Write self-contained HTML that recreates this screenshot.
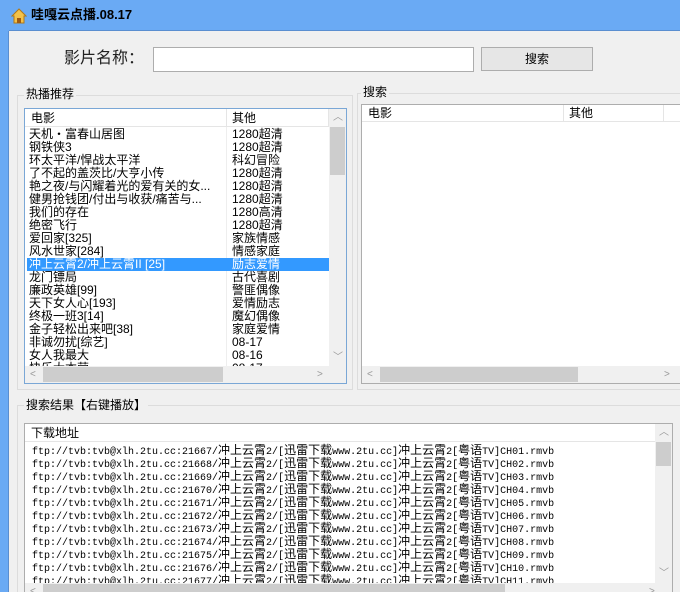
<!DOCTYPE html>
<html style="overflow:hidden;width:680px;height:592px"><head><meta charset="utf-8"><style>
*{margin:0;padding:0;box-sizing:border-box}
body{width:680px;height:592px;overflow:hidden;background:#f0f0f0;position:relative;font-family:"Liberation Sans","Noto Sans CJK SC",sans-serif;font-size:12px;color:#000}
.a{position:absolute}
.grp{position:absolute;border:1px solid #dcdcdc}
.lbl{position:absolute;background:#f0f0f0;padding:0 2px;font-size:12px;line-height:14px}
.list{position:absolute;background:#fff;overflow:hidden}
.row{height:13px;line-height:13px;white-space:nowrap;position:relative;font-size:12px}
.row span{position:absolute;top:0}
.sb{position:absolute;background:#f0f0f0}
.th{position:absolute;background:#cdcdcd}
.arr{position:absolute;color:#999;font-size:10px;line-height:10px}
.mono{font-family:"Liberation Mono","Noto Sans CJK SC",monospace;font-size:10px;height:13px;line-height:13px;white-space:nowrap;padding-left:7px}
.mono b{font-weight:normal;font-family:"Noto Sans CJK SC",sans-serif;font-size:12px}
</style></head><body>
<div class="a" style="left:0;top:0;width:680px;height:31px;background:#6aaaf4;border-bottom:1px solid #5a8ed0"></div>
<div class="a" style="left:0;top:0;width:9px;height:592px;background:#6aaaf4"></div>
<div class="a" style="left:8px;top:31px;width:1px;height:561px;background:#5a8ed0"></div>
<svg class="a" style="left:11px;top:8px" width="16" height="16" viewBox="0 0 16 16"><path d="M1 8 L8 1 L15 8 L13 8 L13 15 L3 15 L3 8Z" fill="#f3c24a" stroke="#b07818"/><rect x="6" y="10" width="4" height="5" fill="#a05a10"/></svg>
<div class="a" style="left:31px;top:6px;font-weight:bold;font-size:13px;line-height:18px">哇嘎云点播.08.17</div>

<div class="a" style="left:64px;top:49px;font-size:16px;line-height:20px;color:#222">影片名称：</div>
<div class="a" style="left:153px;top:47px;width:321px;height:25px;background:#fff;border:1px solid #adadad"></div>
<div class="a" style="left:481px;top:47px;width:112px;height:24px;background:#e6e6e6;border:1px solid #adadad;text-align:center;line-height:22px">搜索</div>

<div class="grp" style="left:17px;top:95px;width:336px;height:295px"></div>
<div class="lbl" style="left:24px;top:87px">热播推荐</div>
<div class="list" style="left:24px;top:108px;width:323px;height:276px;border:1px solid #7aa7d6">
 <div class="a" style="left:0;top:0;width:305px;height:18px;border-bottom:1px solid #e5e5e5"></div>
 <div class="a" style="left:201px;top:0;width:1px;height:18px;background:#e5e5e5"></div>
 <div class="a" style="left:303px;top:0;width:1px;height:18px;background:#e5e5e5"></div>
 <div class="a" style="left:6px;top:2px;line-height:14px">电影</div>
 <div class="a" style="left:207px;top:2px;line-height:14px">其他</div>
 <div class="a" style="left:201px;top:18px;width:1px;height:240px;background:#eee"></div>
 <div class="a" style="left:2px;top:19px;width:302px">
  <div class="row"><span style="left:2px">天机・富春山居图</span><span style="left:205px">1280超清</span></div>
  <div class="row"><span style="left:2px">钢铁侠3</span><span style="left:205px">1280超清</span></div>
  <div class="row"><span style="left:2px">环太平洋/悍战太平洋</span><span style="left:205px">科幻冒险</span></div>
  <div class="row"><span style="left:2px">了不起的盖茨比/大亨小传</span><span style="left:205px">1280超清</span></div>
  <div class="row"><span style="left:2px">艳之夜/与闪耀着光的爱有关的女...</span><span style="left:205px">1280超清</span></div>
  <div class="row"><span style="left:2px">健男抢钱团/付出与收获/痛苦与...</span><span style="left:205px">1280超清</span></div>
  <div class="row"><span style="left:2px">我们的存在</span><span style="left:205px">1280高清</span></div>
  <div class="row"><span style="left:2px">绝密飞行</span><span style="left:205px">1280超清</span></div>
  <div class="row"><span style="left:2px">爱回家[325]</span><span style="left:205px">家族情感</span></div>
  <div class="row"><span style="left:2px">风水世家[284]</span><span style="left:205px">情感家庭</span></div>
  <div class="row" style="background:#3399ff;color:#fff"><span style="left:2px">冲上云霄2/冲上云霄II [25]</span><span style="left:205px">励志爱情</span></div>
  <div class="row"><span style="left:2px">龙门镖局</span><span style="left:205px">古代喜剧</span></div>
  <div class="row"><span style="left:2px">廉政英雄[99]</span><span style="left:205px">警匪偶像</span></div>
  <div class="row"><span style="left:2px">天下女人心[193]</span><span style="left:205px">爱情励志</span></div>
  <div class="row"><span style="left:2px">终极一班3[14]</span><span style="left:205px">魔幻偶像</span></div>
  <div class="row"><span style="left:2px">金子轻松出来吧[38]</span><span style="left:205px">家庭爱情</span></div>
  <div class="row"><span style="left:2px">非诚勿扰[综艺]</span><span style="left:205px">08-17</span></div>
  <div class="row"><span style="left:2px">女人我最大</span><span style="left:205px">08-16</span></div>
  <div class="row"><span style="left:2px">快乐大本营</span><span style="left:205px">08-17</span></div>
 </div>
 <div class="sb" style="left:304px;top:0;width:17px;height:257px"><div class="th" style="left:1px;top:18px;width:15px;height:48px"></div><div class="arr" style="left:4px;top:4px">︿</div><div class="arr" style="left:4px;top:244px">﹀</div></div>
 <div class="sb" style="left:0;top:257px;width:321px;height:17px"><div class="th" style="left:18px;top:1px;width:180px;height:15px"></div><div class="arr" style="left:5px;top:4px">&lt;</div><div class="arr" style="left:292px;top:4px">&gt;</div></div>
</div>

<div class="grp" style="left:357px;top:93px;width:323px;height:297px;border-right:none"></div>
<div class="lbl" style="left:361px;top:85px">搜索</div>
<div class="list" style="left:361px;top:104px;width:319px;height:280px;border:1px solid #adadad;border-right:none">
 <div class="a" style="left:0;top:0;width:325px;height:17px;border-bottom:1px solid #e5e5e5"></div>
 <div class="a" style="left:201px;top:0;width:1px;height:17px;background:#e5e5e5"></div>
 <div class="a" style="left:301px;top:0;width:1px;height:17px;background:#e5e5e5"></div>
 <div class="a" style="left:6px;top:1px;line-height:14px">电影</div>
 <div class="a" style="left:207px;top:1px;line-height:14px">其他</div>
 <div class="sb" style="left:0;top:261px;width:325px;height:17px"><div class="th" style="left:18px;top:1px;width:198px;height:15px"></div><div class="arr" style="left:5px;top:4px">&lt;</div><div class="arr" style="left:302px;top:4px">&gt;</div></div>
</div>

<div class="grp" style="left:17px;top:405px;width:663px;height:187px;border-bottom:none;border-right:none"></div>
<div class="lbl" style="left:24px;top:398px">搜索结果【右键播放】</div>
<div class="list" style="left:24px;top:423px;width:649px;height:169px;border:1px solid #adadad;border-bottom:none">
 <div class="a" style="left:0;top:0;width:630px;height:18px;border-bottom:1px solid #e5e5e5"></div>
 <div class="a" style="left:6px;top:2px;line-height:14px">下载地址</div>
 <div class="a" style="left:0;top:19px;width:630px">
  <div class="mono">ftp://tvb:tvb@xlh.2tu.cc:21667/<b>冲上云霄</b>2/[<b>迅雷下载</b>www.2tu.cc]<b>冲上云霄</b>2[<b>粤语</b>TV]CH01.rmvb</div>
  <div class="mono">ftp://tvb:tvb@xlh.2tu.cc:21668/<b>冲上云霄</b>2/[<b>迅雷下载</b>www.2tu.cc]<b>冲上云霄</b>2[<b>粤语</b>TV]CH02.rmvb</div>
  <div class="mono">ftp://tvb:tvb@xlh.2tu.cc:21669/<b>冲上云霄</b>2/[<b>迅雷下载</b>www.2tu.cc]<b>冲上云霄</b>2[<b>粤语</b>TV]CH03.rmvb</div>
  <div class="mono">ftp://tvb:tvb@xlh.2tu.cc:21670/<b>冲上云霄</b>2/[<b>迅雷下载</b>www.2tu.cc]<b>冲上云霄</b>2[<b>粤语</b>TV]CH04.rmvb</div>
  <div class="mono">ftp://tvb:tvb@xlh.2tu.cc:21671/<b>冲上云霄</b>2/[<b>迅雷下载</b>www.2tu.cc]<b>冲上云霄</b>2[<b>粤语</b>TV]CH05.rmvb</div>
  <div class="mono">ftp://tvb:tvb@xlh.2tu.cc:21672/<b>冲上云霄</b>2/[<b>迅雷下载</b>www.2tu.cc]<b>冲上云霄</b>2[<b>粤语</b>TV]CH06.rmvb</div>
  <div class="mono">ftp://tvb:tvb@xlh.2tu.cc:21673/<b>冲上云霄</b>2/[<b>迅雷下载</b>www.2tu.cc]<b>冲上云霄</b>2[<b>粤语</b>TV]CH07.rmvb</div>
  <div class="mono">ftp://tvb:tvb@xlh.2tu.cc:21674/<b>冲上云霄</b>2/[<b>迅雷下载</b>www.2tu.cc]<b>冲上云霄</b>2[<b>粤语</b>TV]CH08.rmvb</div>
  <div class="mono">ftp://tvb:tvb@xlh.2tu.cc:21675/<b>冲上云霄</b>2/[<b>迅雷下载</b>www.2tu.cc]<b>冲上云霄</b>2[<b>粤语</b>TV]CH09.rmvb</div>
  <div class="mono">ftp://tvb:tvb@xlh.2tu.cc:21676/<b>冲上云霄</b>2/[<b>迅雷下载</b>www.2tu.cc]<b>冲上云霄</b>2[<b>粤语</b>TV]CH10.rmvb</div>
  <div class="mono">ftp://tvb:tvb@xlh.2tu.cc:21677/<b>冲上云霄</b>2/[<b>迅雷下载</b>www.2tu.cc]<b>冲上云霄</b>2[<b>粤语</b>TV]CH11.rmvb</div>
 </div>
 <div class="sb" style="left:630px;top:0;width:17px;height:159px"><div class="th" style="left:1px;top:18px;width:15px;height:24px"></div><div class="arr" style="left:4px;top:4px">︿</div><div class="arr" style="left:4px;top:145px">﹀</div></div>
 <div class="sb" style="left:0;top:159px;width:647px;height:17px"><div class="th" style="left:18px;top:1px;width:462px;height:15px"></div><div class="arr" style="left:5px;top:4px">&lt;</div><div class="arr" style="left:624px;top:4px">&gt;</div></div>
</div>
</body></html>
